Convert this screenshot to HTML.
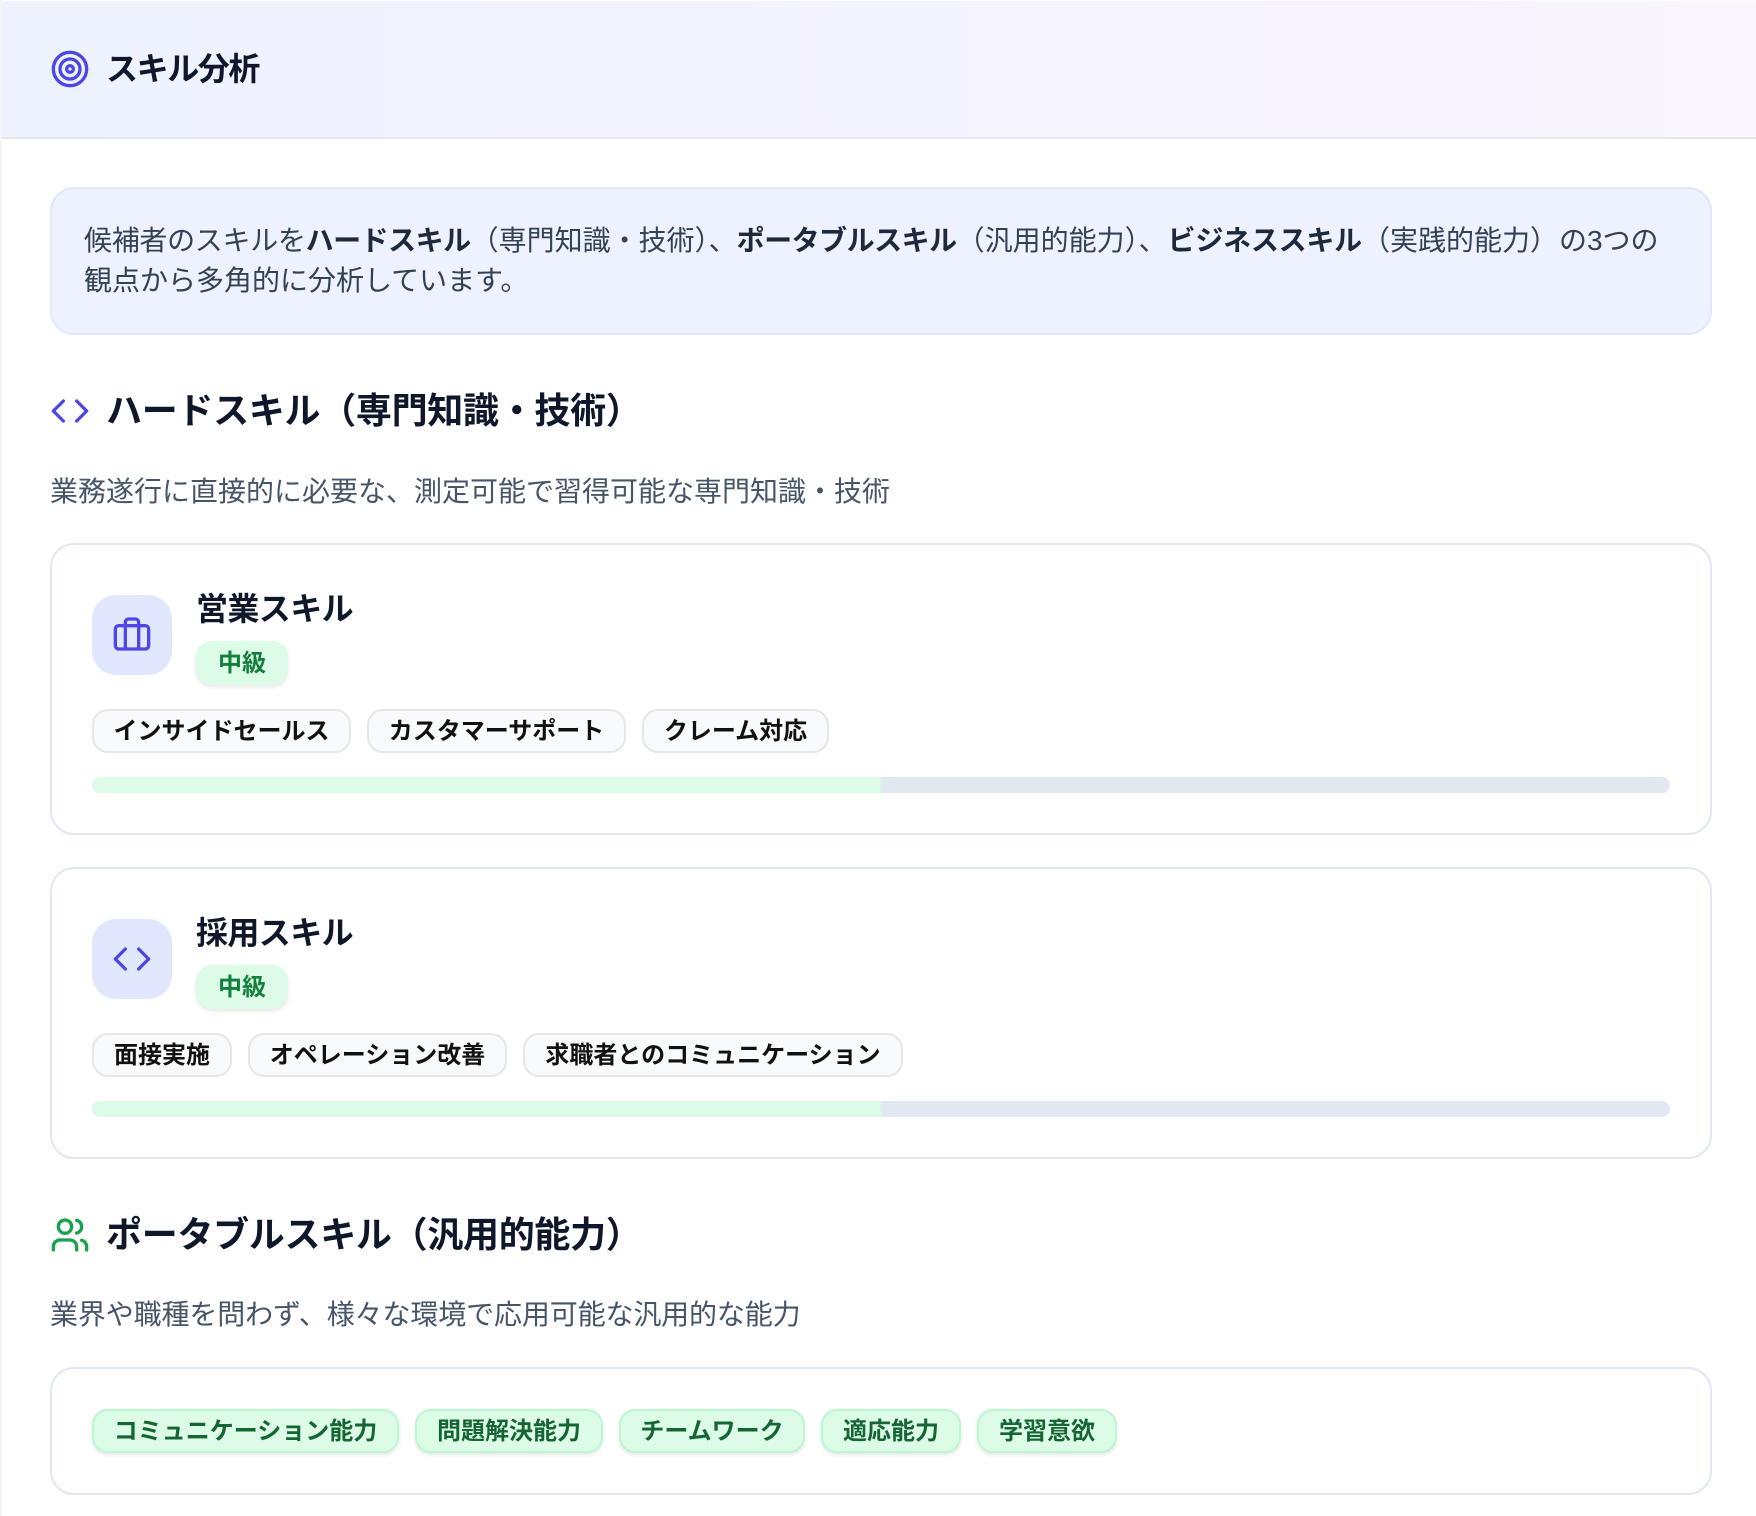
<!DOCTYPE html>
<html lang="ja"><head><meta charset="utf-8"><title>スキル分析</title>
<style>
*{box-sizing:border-box;margin:0;padding:0}
html,body{width:1756px;height:1516px;background:#fff;overflow:hidden}
body{position:relative;font-family:"Liberation Sans","Noto Sans CJK JP",sans-serif}
.a{position:absolute}
.t{position:absolute;white-space:nowrap}
svg{position:absolute;fill:none;stroke-width:2;stroke-linecap:round;stroke-linejoin:round}
.ind{stroke:#4f46e5}
.h2{font-size:36px;font-weight:700;color:#0f172a;line-height:50px;left:106px;letter-spacing:-.3px}
.sub{font-size:28px;color:#475569;line-height:40px;left:50px}
.card{position:absolute;left:50px;width:1662px;background:#fff;border:2px solid #e2e8f0;border-radius:24px}
.ib{position:absolute;left:92px;width:80px;height:80px;background:#e0e7ff;border-radius:24px}
.nm{font-size:32px;font-weight:700;color:#0f172a;line-height:44px;left:196px;letter-spacing:-.6px}
.bd{position:absolute;left:196px;width:92px;height:44px;background:#dcfce7;border-radius:16px;color:#15803d;font-size:24px;font-weight:700;line-height:46px;text-align:center;box-shadow:0 2px 4px rgba(0,0,0,.1)}
.tg{position:absolute;height:44px;background:#f9fafb;border:2px solid #e5e7eb;border-radius:16px;color:#111;font-size:24px;font-weight:700;line-height:42px;text-align:center;white-space:nowrap}
.gt{position:absolute;top:1409px;height:44px;background:#dcfce7;border:2px solid #bbf7d0;border-radius:16px;color:#166534;font-size:24px;font-weight:700;line-height:42px;text-align:center;white-space:nowrap;box-shadow:0 2px 4px rgba(0,0,0,.1)}
.bar{position:absolute;left:92px;width:1578px;height:16px;background:#e2e8f0;border-radius:8px;overflow:hidden}
.bar i{display:block;width:50%;height:100%;background:#dcfce7}
.info{font-size:28px;color:#334155;line-height:40px;left:84px}
.info b{color:#1e293b;font-weight:700;letter-spacing:-.5px}
</style></head><body>
<div class="a" style="left:0;top:0;width:2px;height:1516px;background:#f3f4f6"></div>
<div class="a" style="left:2px;top:1px;width:1754px;height:138px;background:linear-gradient(90deg,#eef2ff,#faf5ff);border-bottom:2px solid #e5e7eb"></div>
<svg class="ind" style="left:50px;top:49px" width="40" height="40" viewBox="0 0 24 24"><circle cx="12" cy="12" r="10"/><circle cx="12" cy="12" r="6"/><circle cx="12" cy="12" r="2"/></svg>
<div class="t" style="left:106px;top:47px;font-size:32px;font-weight:700;color:#0f172a;line-height:44px;letter-spacing:-1.4px">スキル分析</div>

<div class="a" style="left:50px;top:187px;width:1662px;height:148px;background:#eef2ff;border:2px solid #e0e7ff;border-radius:24px"></div>
<div class="t info" style="top:221px"><span style="letter-spacing:-.3px">候補者のスキルを</span><b>ハードスキル</b>（専門知識・技術）、<b>ポータブルスキル</b>（汎用的能力）、<b style="letter-spacing:-.25px;margin-left:1px">ビジネススキル</b>（実践的能力）<span style="margin-left:1px">の3つの</span></div>
<div class="t info" style="top:261px">観点から多角的に分析しています。</div>

<svg class="ind" style="left:50px;top:391px" width="40" height="40" viewBox="0 0 24 24"><polyline points="16 18 22 12 16 6"/><polyline points="8 6 2 12 8 18"/></svg>
<div class="t h2" style="top:386px">ハードスキル（専門知識・技術）</div>
<div class="t sub" style="top:472px">業務遂行に直接的に必要な、測定可能で習得可能な専門知識・技術</div>

<div class="card" style="top:543px;height:292px"></div>
<div class="ib" style="top:595px"></div>
<svg class="ind" style="left:112px;top:614px" width="40" height="40" viewBox="0 0 24 24"><rect x="2" y="7" width="20" height="14" rx="2"/><path d="M16 21V5a2 2 0 0 0-2-2h-4a2 2 0 0 0-2 2v16"/></svg>
<div class="t nm" style="top:587px">営業スキル</div>
<div class="bd" style="top:641px">中級</div>
<div class="tg" style="left:92px;top:709px;width:259px">インサイドセールス</div>
<div class="tg" style="left:367px;top:709px;width:259px">カスタマーサポート</div>
<div class="tg" style="left:642px;top:709px;width:187px">クレーム対応</div>
<div class="bar" style="top:777px"><i></i></div>

<div class="card" style="top:867px;height:292px"></div>
<div class="ib" style="top:919px"></div>
<svg class="ind" style="left:112px;top:939px" width="40" height="40" viewBox="0 0 24 24"><polyline points="16 18 22 12 16 6"/><polyline points="8 6 2 12 8 18"/></svg>
<div class="t nm" style="top:911px">採用スキル</div>
<div class="bd" style="top:965px">中級</div>
<div class="tg" style="left:92px;top:1033px;width:140px">面接実施</div>
<div class="tg" style="left:248px;top:1033px;width:259px">オペレーション改善</div>
<div class="tg" style="left:523px;top:1033px;width:380px">求職者とのコミュニケーション</div>
<div class="bar" style="top:1101px"><i></i></div>

<svg style="left:50px;top:1215px;stroke:#16a34a" width="40" height="40" viewBox="0 0 24 24"><path d="M16 21v-2a4 4 0 0 0-4-4H6a4 4 0 0 0-4 4v2"/><circle cx="9" cy="7" r="4"/><path d="M22 21v-2a4 4 0 0 0-3-3.87"/><path d="M16 3.13a4 4 0 0 1 0 7.75"/></svg>
<div class="t h2" style="top:1210px">ポータブルスキル（汎用的能力）</div>
<div class="t sub" style="top:1295px;letter-spacing:-.13px">業界や職種を問わず、様々な環境で応用可能な汎用的な能力</div>

<div class="card" style="top:1367px;height:128px"></div>
<div class="gt" style="left:92px;width:307px">コミュニケーション能力</div>
<div class="gt" style="left:415px;width:188px">問題解決能力</div>
<div class="gt" style="left:619px;width:186px">チームワーク</div>
<div class="gt" style="left:821px;width:140px">適応能力</div>
<div class="gt" style="left:977px;width:140px">学習意欲</div>
</body></html>
